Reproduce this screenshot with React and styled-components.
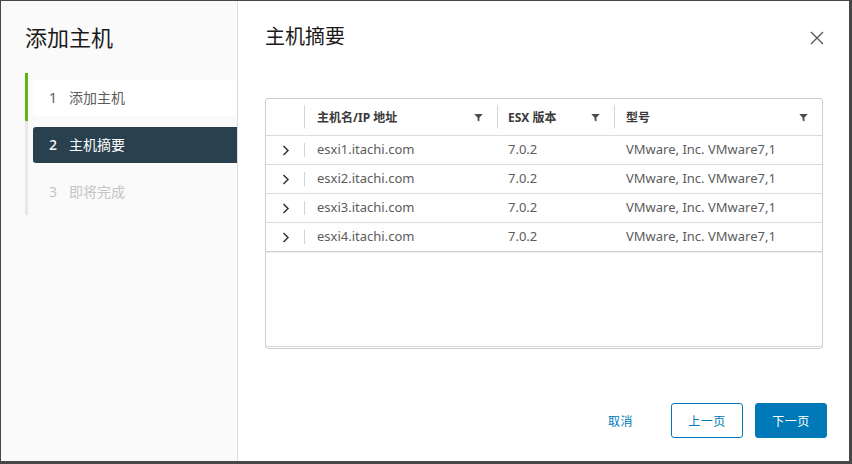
import React from 'react';
import styled, { createGlobalStyle } from 'styled-components';

const GlobalStyle = createGlobalStyle`
  html, body {
    margin: 0;
    padding: 0;
    background: #474747;
  }
  body {
    font-family: "Noto Sans", "Noto Sans CJK SC", sans-serif;
    color: #565656;
  }
`;

const Frame = styled.div`
  width: 852px;
  height: 464px;
  box-sizing: border-box;
  padding: 1px 3px 3px 1px;
`;

const Modal = styled.div`
  display: flex;
  height: 100%;
  background: #fff;
`;

const Sidebar = styled.div`
  width: 237px;
  flex-shrink: 0;
  background: #fafafa;
  border-right: 1px solid #dcdcdc;
  display: flex;
  flex-direction: column;
  padding-left: 24px;
  box-sizing: border-box;
`;

const SideTitle = styled.h1`
  margin: 0;
  padding-top: 21px;
  height: 51px;
  font-size: 22px;
  font-weight: 400;
  line-height: 28px;
  color: #1a1a1a;
  font-family: "Noto Sans CJK SC", sans-serif;
`;

const StepList = styled.div`
  display: flex;
  flex-direction: column;
  border-left: 3px solid #e8e8e8;
`;

const StepSlot = styled.div`
  margin-left: -3px;
  padding: ${p => (p.$first ? '7px 0 5px 5px' : '6px 0 5px 5px')};
  border-left: 3px solid ${p => (p.$done ? '#60b515' : 'transparent')};
`;

const Step = styled.div`
  height: 36px;
  display: flex;
  align-items: center;
  gap: 11px;
  padding-left: 16px;
  padding-bottom: 2px;
  box-sizing: border-box;
  border-radius: 3px 0 0 3px;
  font-size: 14px;
  background: ${p => (p.$state === 'current' ? '#29414e' : p.$state === 'done' ? '#fff' : 'transparent')};
  color: ${p => (p.$state === 'current' ? '#fff' : p.$state === 'done' ? '#5c5c5c' : '#c4c4c4')};
  font-weight: ${p => (p.$state === 'current' ? 500 : 400)};
`;

const StepNum = styled.span`
  width: 9px;
  font-family: "Noto Sans", sans-serif;
`;

const StepLabel = styled.span`
  font-family: "Noto Sans CJK SC", sans-serif;
  font-weight: 400;
`;

const Main = styled.div`
  flex: 1;
  display: flex;
  flex-direction: column;
  padding: 22px 22px 23px 27px;
  min-width: 0;
`;

const Header = styled.div`
  display: flex;
  align-items: center;
  justify-content: space-between;
  height: 30px;
  margin-bottom: 45px;
`;

const Title = styled.h2`
  margin: 0;
  padding-bottom: 5px;
  font-size: 20px;
  font-weight: 400;
  color: #1a1a1a;
  font-family: "Noto Sans CJK SC", sans-serif;
`;

const CloseButton = styled.button`
  border: none;
  background: none;
  padding: 0;
  margin-right: 2px;
  width: 16px;
  height: 16px;
  cursor: pointer;
  display: flex;
`;

const Grid = styled.div`
  margin-right: 4px;
  height: 251px;
  border: 1px solid #cfcfcf;
  border-radius: 3px;
  display: flex;
  flex-direction: column;
  box-sizing: border-box;
`;

const Row = styled.div`
  display: grid;
  grid-template-columns: 38px 193px 117px 1fr;
  height: ${p => (p.$head ? '36px' : '28px')};
  border-bottom: 1px solid ${p => (p.$last ? '#cfcfcf' : '#dcdcdc')};
  box-shadow: ${p => (p.$last ? '0 1px 0 #ececec' : 'none')};
`;

const Cell = styled.div`
  display: flex;
  align-items: center;
  position: relative;
  padding-left: ${p => p.$pad || 13}px;
  padding-right: 14px;
  padding-bottom: ${p => (p.$head ? 0 : 2)}px;
  font-size: ${p => (p.$head ? '12px' : '13px')};
  font-weight: ${p => (p.$head ? 700 : 400)};
  color: ${p => (p.$head ? '#3a3a3a' : '#5c5c5c')};
  justify-content: space-between;
`;

const Sep = styled.span`
  position: absolute;
  left: 0;
  top: 50%;
  width: 1px;
  height: ${p => (p.$head ? '23px' : '14px')};
  transform: translateY(-50%);
  background: #d4d4d4;
`;

const Expander = styled.div`
  display: flex;
  align-items: center;
  justify-content: flex-end;
  padding-right: 14px;
`;

const GridBody = styled.div`
  flex: 1;
`;

const GridFooter = styled.div`
  height: 1px;
  border-top: 1px solid #d8d8d8;
`;

const Footer = styled.div`
  margin-top: auto;
  display: flex;
  justify-content: flex-end;
  align-items: center;
  gap: 12px;
`;

const Button = styled.button`
  height: 35px;
  min-width: 72px;
  padding: 0 ${p => (p.$link ? '25px' : '12px')};
  border-radius: 3px;
  font-size: 12px;
  font-family: "Noto Sans CJK SC", sans-serif;
  letter-spacing: 0.5px;
  cursor: pointer;
  border: 1px solid ${p => (p.$variant === 'link' ? 'transparent' : '#0079b8')};
  background: ${p => (p.$variant === 'primary' ? '#0079b8' : 'transparent')};
  color: ${p => (p.$variant === 'primary' ? '#fff' : '#0079b8')};
`;

const Filter = () => (
  <svg width="9" height="9" viewBox="0 0 9 9">
    <path d="M0.3 1 H8.7 L5.4 4.7 V8.4 L3.6 7.5 V4.7 Z" fill="#4a4a4a" />
  </svg>
);

const Chevron = () => (
  <svg width="8" height="11" viewBox="0 0 8 11">
    <path d="M1.5 1 L6 5.5 L1.5 10" fill="none" stroke="#333" strokeWidth="1.5" />
  </svg>
);

const hosts = ['esxi1.itachi.com', 'esxi2.itachi.com', 'esxi3.itachi.com', 'esxi4.itachi.com'];

export default function App() {
  return (
    <>
      <GlobalStyle />
      <Frame>
        <Modal>
          <Sidebar>
            <SideTitle>添加主机</SideTitle>
            <StepList>
              <StepSlot $first $done>
                <Step $state="done"><StepNum>1</StepNum><StepLabel>添加主机</StepLabel></Step>
              </StepSlot>
              <StepSlot>
                <Step $state="current"><StepNum>2</StepNum><StepLabel>主机摘要</StepLabel></Step>
              </StepSlot>
              <StepSlot>
                <Step $state="todo"><StepNum>3</StepNum><StepLabel>即将完成</StepLabel></Step>
              </StepSlot>
            </StepList>
          </Sidebar>
          <Main>
            <Header>
              <Title>主机摘要</Title>
              <CloseButton aria-label="关闭">
                <svg width="16" height="16" viewBox="0 0 16 16">
                  <path d="M2 2 L14 14 M14 2 L2 14" stroke="#555" strokeWidth="1.3" />
                </svg>
              </CloseButton>
            </Header>
            <Grid>
              <Row $head>
                <Expander />
                <Cell $head $pad={13}><Sep $head />主机名/IP 地址<Filter /></Cell>
                <Cell $head $pad={11}><Sep $head />ESX 版本<Filter /></Cell>
                <Cell $head $pad={12}><Sep $head />型号<Filter /></Cell>
              </Row>
              {hosts.map((h, i) => (
                <Row key={h} $last={i === hosts.length - 1}>
                  <Expander><Chevron /></Expander>
                  <Cell $pad={13}><Sep />{h}</Cell>
                  <Cell $pad={11}>7.0.2</Cell>
                  <Cell $pad={12}>VMware, Inc. VMware7,1</Cell>
                </Row>
              ))}
              <GridBody />
              <GridFooter />
            </Grid>
            <Footer>
              <Button $variant="link" $link>取消</Button>
              <Button>上一页</Button>
              <Button $variant="primary">下一页</Button>
            </Footer>
          </Main>
        </Modal>
      </Frame>
    </>
  );
}
